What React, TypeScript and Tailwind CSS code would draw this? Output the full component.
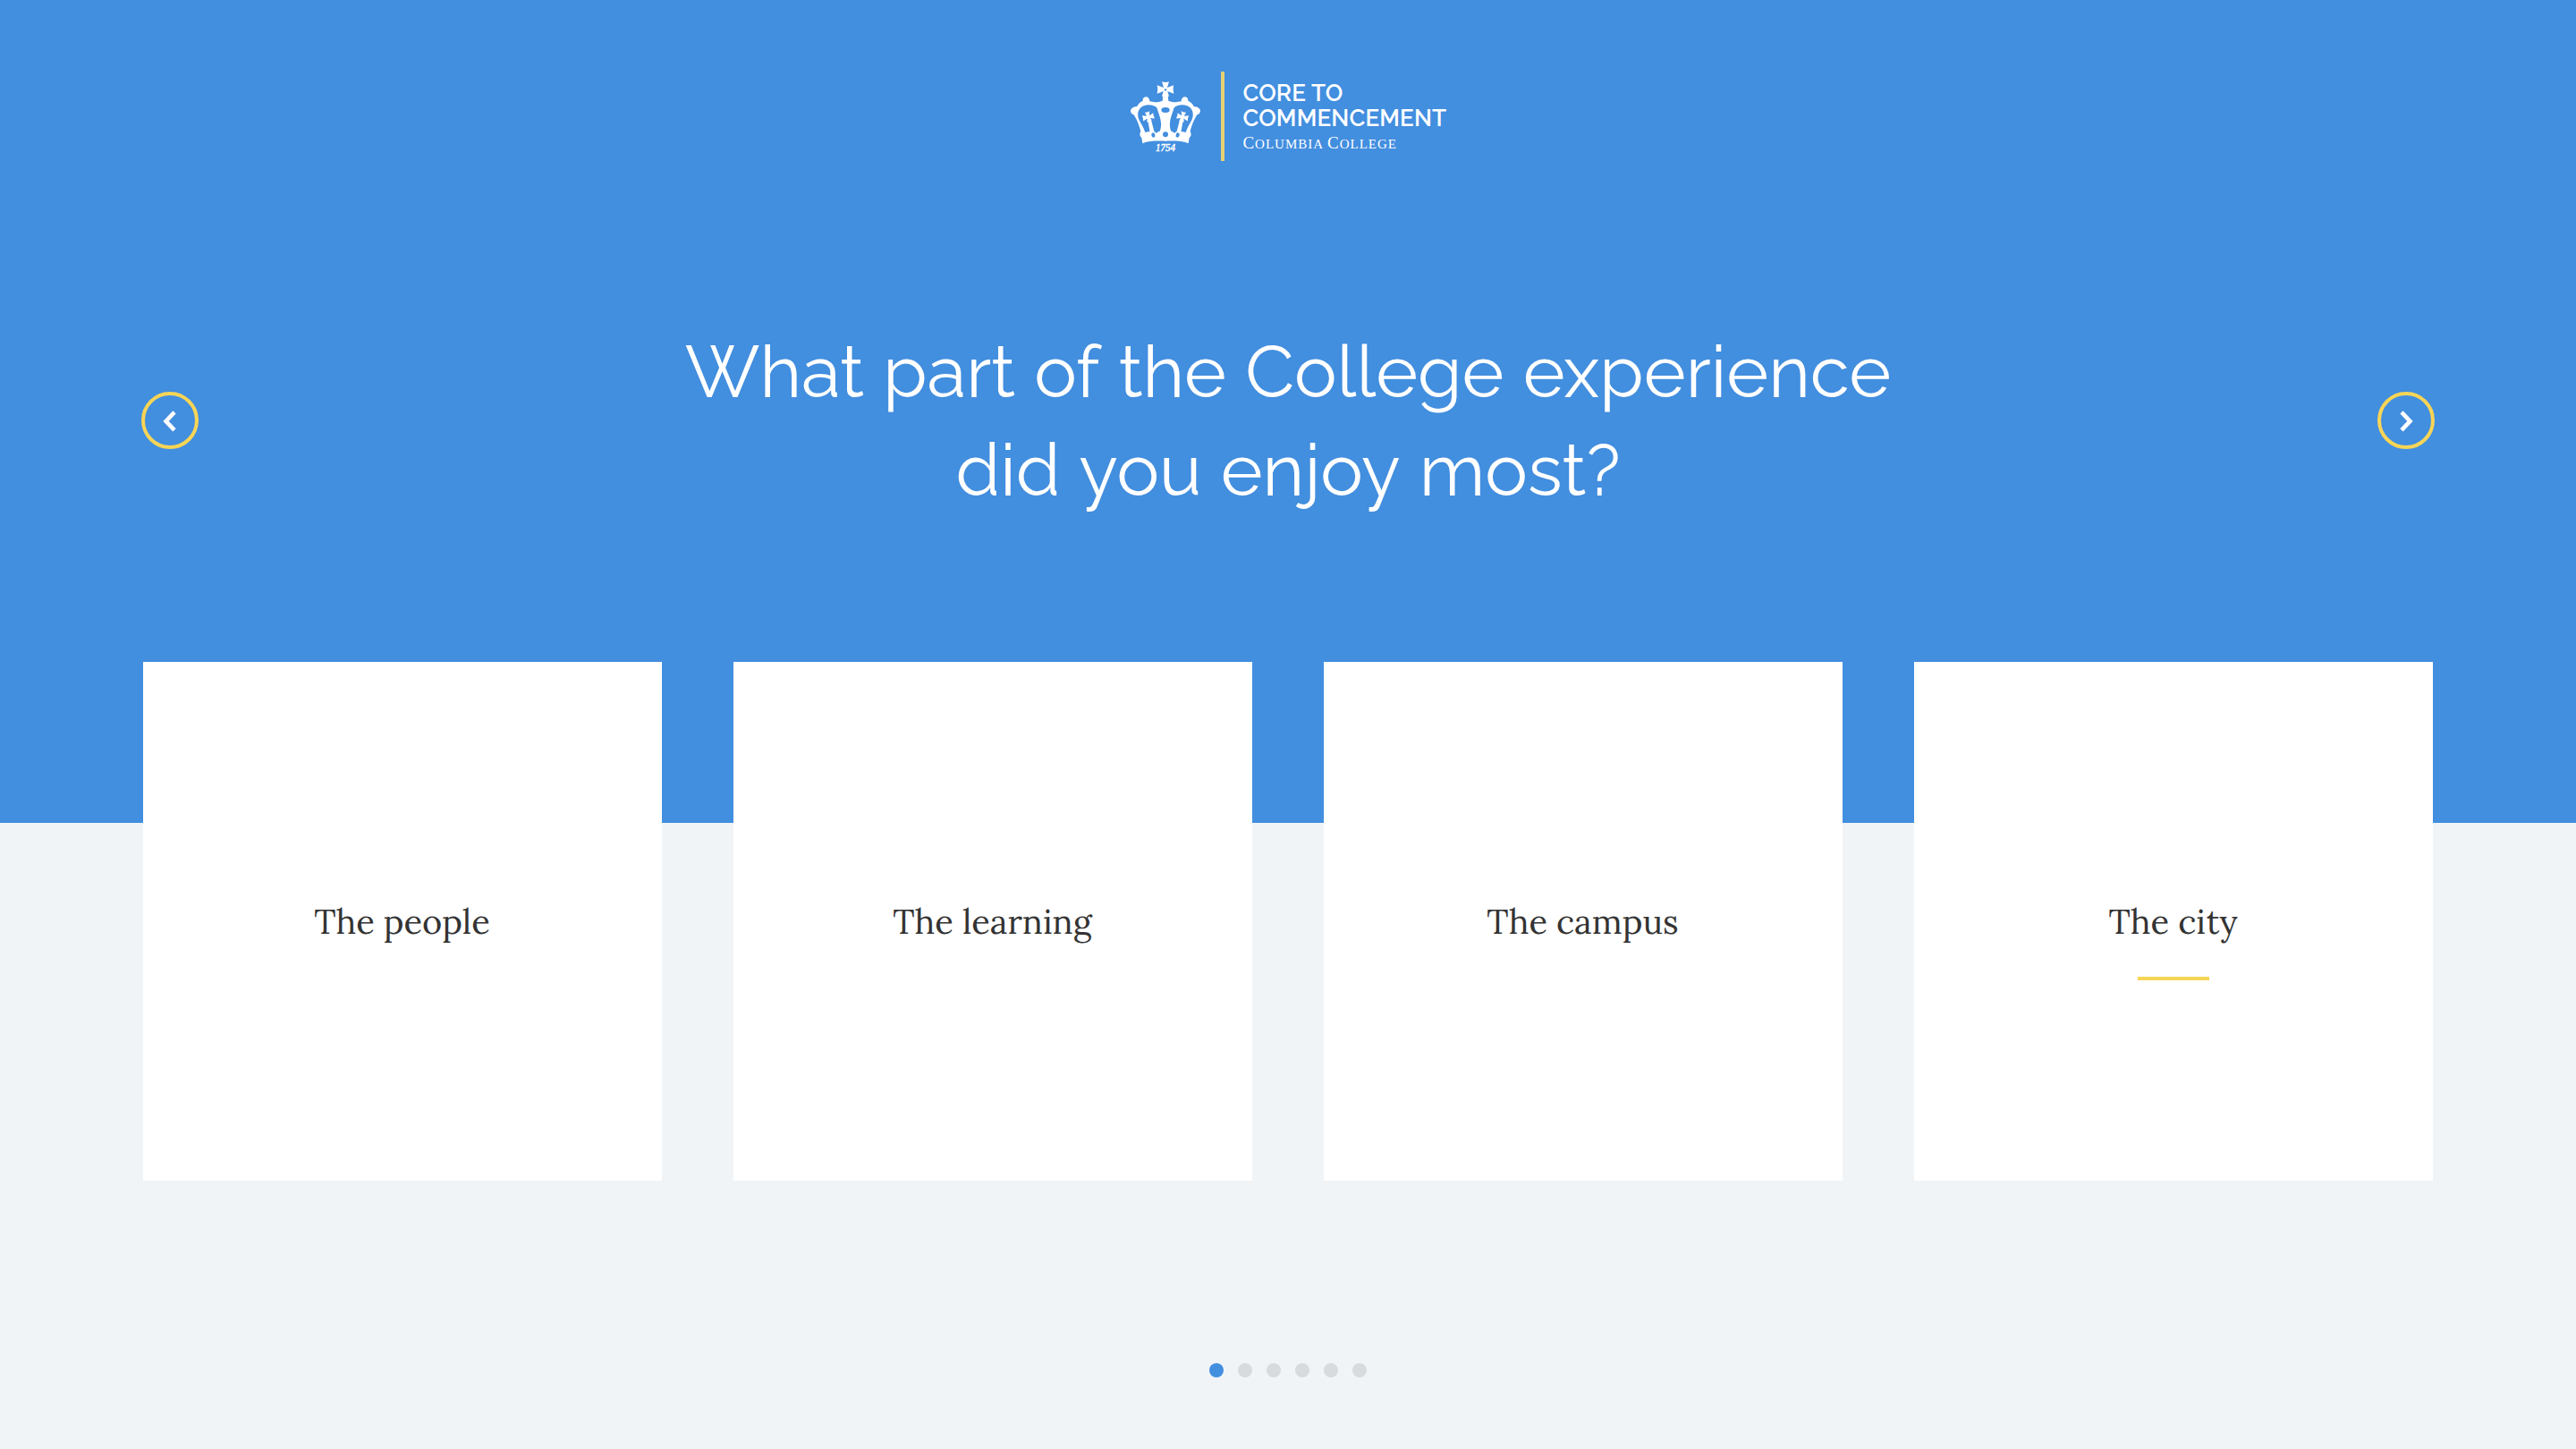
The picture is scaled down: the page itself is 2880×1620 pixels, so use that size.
const answers = ["The people", "The learning", "The campus", "The city"];

const questionLines = [
  ["What", "part", "of", "the", "College", "experience"],
  ["did", "you", "enjoy", "most?"],
];

const CROSS = "M147 63 Q159 67 171 63 L165 83 L186 75 Q183 89 187 103 L166 95 L171 112 Q159 109 147 112 L152 95 L131 103 Q135 89 131 75 L153 83 Z";

function HalfCrown() {
  return (
    <g>
      <path
        fillRule="evenodd"
        d="M160 125 C148 127 140 131 130 132 C120 132 112 130 106 129 C106 120 101 114 94 114 C87 114 82 120 83 127 C74 131 66 139 63 147 C55 145 44 150 42 160 C42 168 48 173 52 173 C60 185 69 202 76 229 C72 236 72 246 79 251 L82 270 C105 260 135 262 160 262 Z
           M86 144 C101 138 124 141 131 152 C134 165 142 180 144 200 C145 212 143 222 140 229 C134 230 131 233 129 236 C124 231 118 228 111 230 C104 230 98 231 91 233 C87 220 79 207 71 192 C63 176 65 153 86 144 Z"
      />
      <path transform="translate(101.5 181) rotate(-13) scale(.7) translate(-159 -88)" d={CROSS} />
      <path d="M99 188 L110 187 L122 233 L107 233 Z" />
    </g>
  );
}

function Crown() {
  return (
    <svg viewBox="36 56 248 248" className="h-[82.67px] w-[82.67px]" fill="#fff">
      <HalfCrown />
      <g transform="matrix(-1 0 0 1 318 0)">
        <HalfCrown />
      </g>
      <path d={CROSS} />
      <path d="M151 104 L167 104 L169 130 L149 130 Z" />
      <g fill="#428edf">
        <circle cx="159" cy="90" r="3.5" />
        <ellipse cx="159" cy="158" rx="14" ry="9" />
        <circle cx="159" cy="240" r="9" />
        <ellipse cx="118" cy="242" rx="6" ry="8" transform="rotate(-15 118 242)" />
        <ellipse cx="200" cy="242" rx="6" ry="8" transform="rotate(15 200 242)" />
      </g>
      <text x="159" y="297" textAnchor="middle" textLength="66" lengthAdjust="spacingAndGlyphs" stroke="#fff" strokeWidth="1.5" className="font-['Liberation_Serif',serif] text-[38px] italic">
        1754
      </text>
    </svg>
  );
}

function Logo() {
  return (
    <div className="flex h-[100px] w-[356px]">
      <div className="w-[103px] pt-[8.67px]">
        <Crown />
      </div>
      <div className="h-full w-1 bg-[#e5d372]" />
      <div className="pt-[10px] pl-[20.4px] whitespace-nowrap text-white">
        <div className="font-[Raleway,Lato,sans-serif] text-[26px] leading-[28px] font-semibold tracking-[0.18px]">
          CORE TO
          <br />
          COMMENCEMENT
        </div>
        <div className="pt-[2px] font-['Liberation_Serif',serif] text-[15px] leading-[24px] tracking-[1px]">
          <span className="text-[19px]">C</span>OLUMBIA <span className="text-[19px]">C</span>OLLEGE
        </div>
      </div>
    </div>
  );
}

function ArrowButton({ direction }: { direction: "left" | "right" }) {
  return (
    <button aria-label={direction} className="flex size-16 items-center justify-center rounded-full border-4 border-[#f7d556]">
      <svg viewBox="0 0 56 56" className="size-14" fill="none" stroke="#fff" strokeWidth="4.6">
        {direction === "left" ? <path d="M33 18.9 L23.5 28.9 L33 38.9" /> : <path d="M23 18.9 L32.5 28.9 L23 38.9" />}
      </svg>
    </button>
  );
}

export default function App() {
  return (
    <div className="h-[1620px] w-[2880px] overflow-hidden bg-[#f0f4f7]">
      <header className="flex h-[920px] flex-col items-center bg-[#428edf] px-[158px] pt-20">
        <Logo />
        <div className="mt-[180px] flex w-full items-start justify-between">
          <div className="pt-[78px]">
            <ArrowButton direction="left" />
          </div>
          <h1 className="pt-px text-center font-[Raleway,Lato,sans-serif] text-[80px] leading-[110px] font-normal [word-spacing:0.7px] text-white">
            {questionLines.map((words) => (
              <span key={words[0]} className="block">
                {words.map((word, i) => (
                  <span key={word}>
                    {i > 0 && " "}
                    <span className="inline-block">{word}</span>
                  </span>
                ))}
              </span>
            ))}
          </h1>
          <div className="pt-[78px]">
            <ArrowButton direction="right" />
          </div>
        </div>
      </header>
      <main className="-mt-[180px] grid grid-cols-4 gap-20 px-40">
        {answers.map((answer) => (
          <div key={answer} className="flex h-[580px] flex-col items-center bg-white pt-[266px]">
            <div className="pr-px font-[Lora,'Liberation_Serif',serif] text-[38px] leading-[48px] text-[#333]">{answer}</div>
            {answer === "The city" && <div className="mt-[38px] h-1 w-20 bg-[#f7d556]" />}
          </div>
        ))}
      </main>
      <nav className="mt-[204px] flex justify-center gap-4">
        {[0, 1, 2, 3, 4, 5].map((i) => (
          <span key={i} className={i === 0 ? "size-4 rounded-full bg-[#428edf]" : "size-4 rounded-full bg-[#d7dbdd]"} />
        ))}
      </nav>
    </div>
  );
}
